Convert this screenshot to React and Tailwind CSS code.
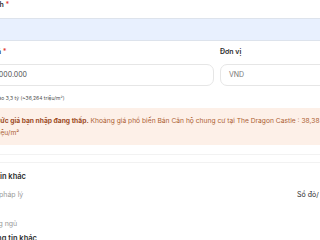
export default function App() {
  return (
    <div className="h-[240px] w-[320px] overflow-hidden bg-white font-['Inter',sans-serif] text-[#2c2c2c]">
      <div className="ml-[-26px] w-[420px]">
        {/* Diện tích */}
        <div className="text-[7px] font-semibold leading-[10px]">
          Diện tích <span className="text-[#e03c31]">*</span>
        </div>
        <div className="mt-[8px] h-[23px] border-y border-[#dde3ec] bg-[#e8f0fe]" />

        {/* Mức giá + Đơn vị */}
        <div className="mt-[6px] flex gap-[6px]">
          <div className="w-[240px]">
            <div className="text-[7px] font-semibold leading-[10px]">
              Mức giá <span className="text-[#e03c31]">*</span>
            </div>
            <div className="mt-[7px] flex h-[22px] items-center rounded-[7px] border border-[#e6e6e6] pl-[3px] text-[7px] text-[#505050]">
              3.300.000.000
            </div>
          </div>
          <div className="flex-1">
            <div className="text-[7px] font-semibold leading-[10px]">Đơn vị</div>
            <div className="mt-[7px] flex h-[22px] items-center rounded-[7px] border border-[#e6e6e6] pl-[8px] text-[7px] text-[#777]">
              VND
            </div>
          </div>
        </div>

        <div className="mt-[7px] text-[5px] leading-[10px] text-[#505050]">
          Tổng giá vào 3,3 tỷ (~36,264 triệu/m²)
        </div>

        {/* Warning */}
        <div className="mt-[5px] bg-[#fdf0e8] pb-[6px] pl-[20px] pt-[7px] text-[6.7px] leading-[12px] whitespace-nowrap text-[#ad6234]">
          <span className="font-bold text-[#9c4b1f]">Mức giá bạn nhập đang thấp.</span> Khoảng giá phổ biến Bán Căn hộ chung cư tại The Dragon Castle : 38,38 - 52,1
          <br />
          triệu/m²
        </div>

        <div className="mt-[9px] border-t border-[#f2f2f2]" />
        <div className="mt-[7px] border-t border-[#f2f2f2]" />

        {/* Thông tin khác */}
        <div className="ml-[-2px] mt-[9px] text-[7.5px] font-semibold leading-[10px]">Thông tin khác</div>
        <div className="mt-[8px] flex text-[7px] leading-[10px]">
          <span className="w-[323px] shrink-0 text-[#999]">Giấy tờ pháp lý</span>
          <span className="whitespace-nowrap text-[#2c2c2c]">Sổ đỏ/ Sổ hồng</span>
        </div>
        <div className="ml-[-3px] mt-[19px] text-[7px] leading-[10px] text-[#999]">Số phòng ngủ</div>
        <div className="ml-[9px] mt-[5px] text-[7.5px] font-semibold leading-[10px]">Thông tin khác</div>
      </div>
    </div>
  );
}
